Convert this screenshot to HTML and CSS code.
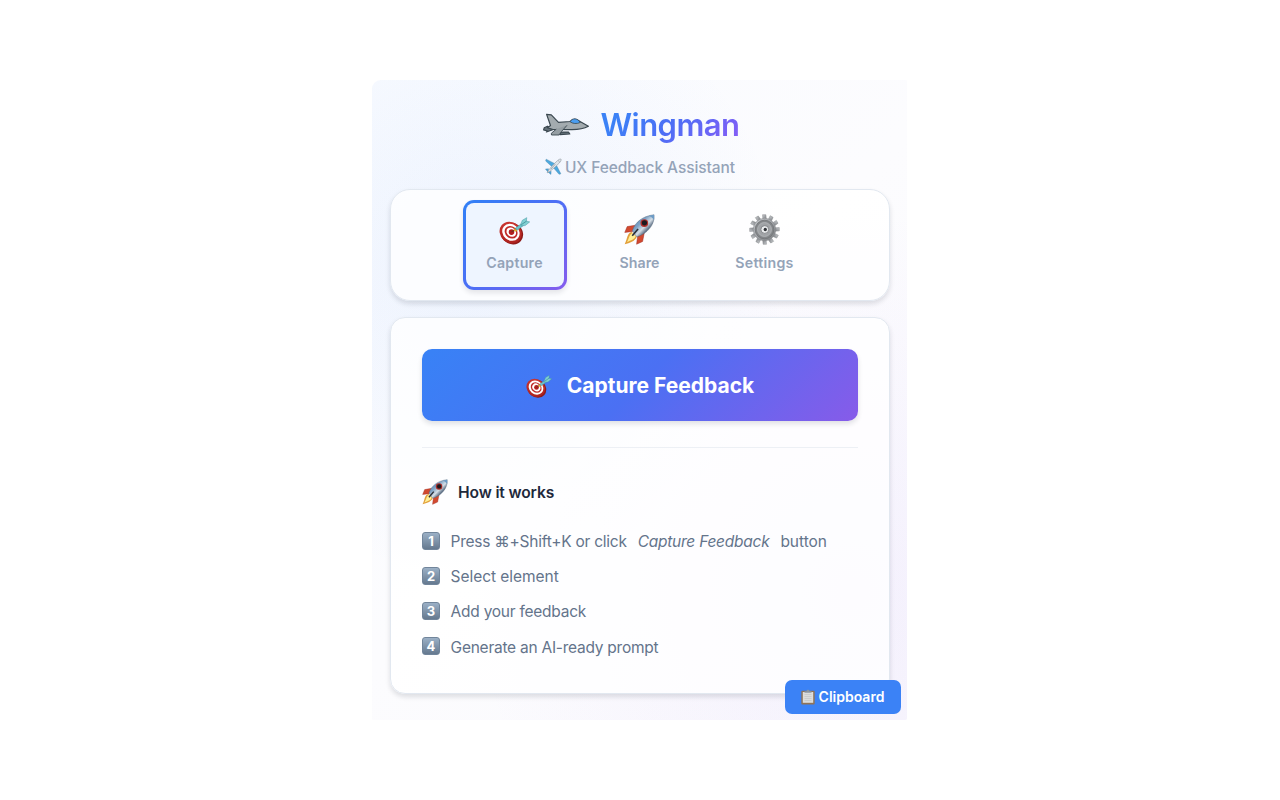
FILE: index.html
```html
<!DOCTYPE html>
<html lang="en">
<head>
<meta charset="utf-8">
<title>Wingman</title>
<link rel="stylesheet" href="styles.css">
</head>
<body>
<svg class="defs" aria-hidden="true">
  <defs>
    <linearGradient id="red" x1="0" y1="0" x2="1" y2="1"><stop offset="0" stop-color="#d03a34"/><stop offset="1" stop-color="#a81d1a"/></linearGradient>
    <linearGradient id="hull" x1="0" y1="0" x2="1" y2="1"><stop offset="0" stop-color="#3f74a6"/><stop offset=".38" stop-color="#7fa3c6"/><stop offset=".55" stop-color="#d5dee6"/><stop offset=".68" stop-color="#64768b"/><stop offset="1" stop-color="#1f2833"/></linearGradient>
    <linearGradient id="steel" x1="0" y1="0" x2="1" y2="1"><stop offset="0" stop-color="#c9cccf"/><stop offset=".5" stop-color="#a0a3a7"/><stop offset="1" stop-color="#7c7f82"/></linearGradient>
    <symbol id="target" viewBox="0 0 32 28">
      <ellipse cx="13.4" cy="16.6" rx="12" ry="10.8" transform="rotate(40 13.4 16.6)" fill="#8e1a18"/>
      <ellipse cx="12" cy="15.6" rx="12" ry="10.6" transform="rotate(40 12 15.6)" fill="url(#red)"/>
      <ellipse cx="12.3" cy="15.4" rx="9.5" ry="8.2" transform="rotate(40 12.3 15.4)" fill="#fff"/>
      <ellipse cx="12.5" cy="15.3" rx="7.1" ry="6" transform="rotate(40 12.5 15.3)" fill="#bf2a27"/>
      <ellipse cx="12.7" cy="15.2" rx="5.3" ry="4.4" transform="rotate(40 12.7 15.2)" fill="#fff"/>
      <circle cx="12.9" cy="15.1" r="2.9" fill="#b41e1e"/>
      <path d="M12.9 15l5-3.3" stroke="#6b3a22" stroke-width="1.2"/>
      <path d="M16 11.2l3 2.8-2.6.4-1.1-1.2z" fill="#e3b52e"/>
      <path d="M17 10.8L23.5 6.2l1.7 2.2-6.5 4.8z" fill="#6cc3ca" stroke="#378b98" stroke-width=".5"/>
      <path d="M22.5 6.8l1.6-3.9L28.7.2l-.5 3.6 3.5.8-4.7 3.8-4.2.3z" fill="#7fcfd2" stroke="#4297a2" stroke-width=".5"/>
      <path d="M23 7.5l5.4-3.7" stroke="#367f8c" stroke-width=".7"/>
    </symbol>
    <symbol id="rocket" viewBox="0 0 32 32">
      <path d="M12 11.5L3.3 13 .8 19l8-1z" fill="#d2492f" stroke="#9b2c22" stroke-width=".5"/>
      <path d="M21 19l-1.8 9.4-6.2 2.8 1-8z" fill="#d2492f" stroke="#9b2c22" stroke-width=".5"/>
      <path d="M8 18.5C3 19.5 3.8 25 .7 31.2 6 29.8 11 28.5 13.2 23.5z" fill="#e2a03b"/>
      <path d="M8.5 19.5c-3 1.8-3 5-5.5 9.5 4.3-1.8 7.8-2.8 9-6z" fill="#fff096"/>
      <path d="M8.6 17.2C12 7.5 19.8 2.2 31 .8 32.2 11 23.5 20.8 13.2 23.6z" fill="url(#hull)" stroke="#53667a" stroke-width=".5"/>
      <path d="M25.5 1.9Q28.5 3 31.1 6.3L31 .8z" fill="#6d9cc6"/>
      <path d="M14.5 15.5L8.5 22.5" stroke="#292e36" stroke-width="1.7"/>
      <circle cx="21" cy="9.3" r="4" fill="#b02f2b"/><circle cx="21.1" cy="9.1" r="2.7" fill="#1c1a20"/>
    </symbol>
    <symbol id="gear" viewBox="0 0 32 32">
      <g fill="url(#steel)" stroke="#84878a" stroke-width=".5">
        <path id="tooth" d="M14.3 5.5L14 .7h3.4l.5 4.8z"/>
        <use href="#tooth" transform="rotate(30 16 16)"/><use href="#tooth" transform="rotate(60 16 16)"/><use href="#tooth" transform="rotate(90 16 16)"/><use href="#tooth" transform="rotate(120 16 16)"/><use href="#tooth" transform="rotate(150 16 16)"/><use href="#tooth" transform="rotate(180 16 16)"/><use href="#tooth" transform="rotate(210 16 16)"/><use href="#tooth" transform="rotate(240 16 16)"/><use href="#tooth" transform="rotate(270 16 16)"/><use href="#tooth" transform="rotate(300 16 16)"/><use href="#tooth" transform="rotate(330 16 16)"/>
        <circle cx="16" cy="16" r="11.6"/>
      </g>
      <circle cx="16" cy="16" r="9.6" fill="#85888b" stroke="#707376" stroke-width=".8"/>
      <circle cx="16" cy="16" r="7.2" fill="#a0a3a6" stroke="#b5b8ba" stroke-width=".8"/>
      <circle cx="16.3" cy="16" r="4" fill="#eceeef" stroke="#73767a" stroke-width=".8"/>
      <circle cx="16.8" cy="16" r="1.7" fill="#303338"/>
    </symbol>
  </defs>
</svg>
<main class="panel">
  <header class="header">
    <div class="brand">
      <svg class="jet" viewBox="0 0 46 24" stroke="#3a474f" stroke-width="1.2" stroke-linejoin="round">
        <path d="M4.5 13.2L1.2 14.8.6 17l3.6.8L3.4 19l7-2.5z" fill="#65717a"/>
        <path d="M7.5 12.5L3.6 1.4l4.7.4L15.5 9.4l11.5-.9c3-2.8 7-2.8 10.5.2l7.9 4.5c-5 2.6-10 3.3-16.5 3.5L10 16.5l-5.6-1.8z" fill="#a3abaf"/>
        <path d="M18 19l7.5.1 1.3 1.9-9.8.6z" fill="#65727a"/>
        <path d="M24 12.3l-5.5 6.2L16 22H8.5l-.2-1.7 5-4.2" fill="#959ea3" stroke-width=".9"/>
        <path d="M27 8.7c2.5-4.2 7.5-3.8 10.3.8-3.6 1.6-7.8 1.3-10.3-.8z" fill="#4a9df0" stroke-width=".8"/>
      </svg>
      <h1 class="title">Wingman</h1>
    </div>
    <div class="tagline">
      <svg class="plane" viewBox="0 0 18 18">
        <g fill="#4ba8df" stroke="#477e9f" stroke-width=".4"><path d="M10.5 6L1.2 1.2.7 3.2l7 6.3z"/><path d="M12 7.5l4.8 9.3-1.9.5-6.2-7.3z"/><path d="M3.8 11.5l-3.3.2 2.5 3z"/><path d="M6.5 14L6.3 17.4 3.3 15z"/></g>
        <path d="M2.2 15.8C4 12 8.5 7 13 3c1.5-1.5 3-2.2 4-1.8.4 1-.3 2.5-1.8 4C10.5 10 6 14 2.2 15.8z" fill="#e0e5e9" stroke="#8a939b" stroke-width=".6"/>
        <path d="M14 2.8l1.6 1.5M6 12l5-5.5" stroke="#72808c" stroke-width=".6"/>
      </svg>
      <span>UX Feedback Assistant</span>
    </div>
  </header>
  <nav class="tabs">
    <div class="tab active"><svg class="tab-icon icon-target"><use href="#target"/></svg><span class="tab-label">Capture</span></div>
    <div class="tab"><svg class="tab-icon"><use href="#rocket"/></svg><span>Share</span></div>
    <div class="tab"><svg class="tab-icon"><use href="#gear"/></svg><span class="tab-label">Settings</span></div>
  </nav>
  <section class="card">
    <button class="capture"><svg class="capture-icon"><use href="#target"/></svg><span>Capture Feedback</span></button>
    <div class="works">
      <h2 class="works-title"><svg class="works-icon"><use href="#rocket"/></svg><span>How it works</span></h2>
      <div class="steps">
        <div class="step"><b class="key">1</b><span>Press ⌘+Shift+K or click</span><em class="em">Capture Feedback</em><span class="plain">button</span></div>
        <div class="step"><b class="key">2</b><span class="plain">Select element</span></div>
        <div class="step"><b class="key">3</b><span>Add your feedback</span></div>
        <div class="step"><b class="key">4</b><span>Generate an AI-ready prompt</span></div>
      </div>
    </div>
  </section>
  <div class="clipboard">
    <svg class="clip-icon" viewBox="0 0 14 16"><rect x=".3" y="1.7" width="13.4" height="13.9" rx="1" fill="#8f7358"/><path d="M1.8 3h10.4v10.8H1.8z" fill="#dcdddc"/><path d="M3.5 5.5h7M3.5 7.5h7M3.5 9.5h7M3.5 11.5h7" stroke="#c0c2c3" stroke-width=".6"/><path d="M3.5 3.7V2.2h2C5.6.2 8.4.2 8.5 2.2h2v1.5z" fill="#8c98a3"/></svg>
    <span>Clipboard</span>
  </div>
</main>
</body>
</html>
```
FILE: styles.css
```css
* { box-sizing: border-box; }
body { margin: 0; height: 800px; background: #fff; font-family: Inter, "Liberation Sans", sans-serif; display: flex; justify-content: center; align-items: center; overflow: hidden; }
svg { display: block; flex: none; overflow: visible; }
.defs { position: absolute; width: 0; height: 0; }
span, em, h1 { white-space: nowrap; }
.panel { position: relative; width: 535px; height: 640px; margin-right: 1px; padding: 22px 17px 0 18px; border-radius: 9px 2px 2px 2px;
  background: radial-gradient(circle at 20% 30%, rgba(59,130,246,.07), transparent 50%), radial-gradient(circle at 90% 80%, rgba(139,92,246,.06), transparent 55%), linear-gradient(135deg, #f9fbff, #fcfcfe 50%, #faf9fd); }
.header { height: 87px; }
.brand { display: flex; justify-content: center; align-items: center; gap: 12px; height: 46px; padding-left: 3px; }
.jet { width: 46px; height: 24px; }
.title { margin: 0; padding-right: 1px; font-size: 31px; line-height: 40px; font-weight: 600; letter-spacing: -.55px; color: transparent; background: linear-gradient(135deg, #3b82f6 15%, #4c6ef5 50%, #8b5cf6); background-clip: text; -webkit-background-clip: text; }
.tagline { display: flex; justify-content: center; align-items: center; gap: 3px; height: 24px; margin-top: 7px; font-size: 15.5px; font-weight: 500; color: #94a3b8; letter-spacing: -.08px; }
.plane { width: 17px; height: 17px; margin-top: -1px; }
.tabs { display: flex; justify-content: center; gap: 21px; height: 112px; padding: 10px 24px 0 23px; border: 1px solid #e2e8f0; border-radius: 20px; background: rgba(255,255,255,.8); box-shadow: 0 3px 5px rgba(15,23,42,.13); }
.tab { width: 104px; height: 90px; border: 3px solid transparent; border-radius: 11px; display: flex; flex-direction: column; align-items: center; padding-top: 11px; gap: 8px; color: #94a3b8; font-size: 14.2px; line-height: 20px; font-weight: 600; }
.tab.active { background: linear-gradient(#eef5ff, #eef5ff) padding-box, linear-gradient(135deg, #3080f6, #4c6ef5 50%, #865ced) border-box; box-shadow: 0 3px 5px rgba(15,23,42,.1); }
.tab-label { letter-spacing: .25px; }
.tab-icon { width: 31px; height: 31px; }
.icon-target { width: 31px; height: 28px; margin-top: 3px; }
.card { height: 377px; margin-top: 16px; padding: 31px; border: 1px solid #e2e8f0; border-radius: 15px; background: rgba(255,255,255,.8); box-shadow: 0 3px 5px rgba(15,23,42,.13); }
.capture { display: flex; width: 436px; height: 72px; justify-content: center; align-items: center; gap: 15px; padding: 0; border: 0; border-radius: 10px; background: linear-gradient(135deg, #3882f6, #4b70f3 50%, #875be9); color: #fff; font: 700 21px Inter, sans-serif; box-shadow: 0 3px 5px rgba(15,23,42,.12); }
.capture-icon { width: 26px; height: 23px; margin-top: 2px; }
.works { margin-top: 26px; border-top: 1px solid #edf0f5; padding-top: 29px; }
.works-title { margin: 0; display: flex; gap: 10px; align-items: center; height: 30px; color: #1e293b; font-size: 15.6px; font-weight: 600; letter-spacing: -.13px; }
.works-title span { padding-top: 1px; }
.works-icon { width: 26px; height: 26px; }
.steps { padding-top: 16px; }
.step { display: flex; align-items: center; height: 35.2px; color: #64748b; font-size: 15.5px; letter-spacing: -.25px; }
.step span, .em { padding-top: 2px; }
.plain { letter-spacing: -.04px; }
.key { width: 18px; height: 18px; margin-right: 10.6px; border-radius: 3px; border: 1px solid #71859b; background: linear-gradient(#9bb0c6, #65798f); color: #fff; font-size: 13px; line-height: 16px; text-align: center; letter-spacing: 0; }
.em { margin: 0 11px; font-style: italic; }
.clipboard { position: absolute; left: 412.5px; top: 600px; width: 116px; height: 33.5px; border-radius: 7px; background: #3b82f6; display: flex; align-items: center; justify-content: center; gap: 4px; color: #fff; font-size: 14px; font-weight: 600; }
.clip-icon { width: 14px; height: 16px; }
```
